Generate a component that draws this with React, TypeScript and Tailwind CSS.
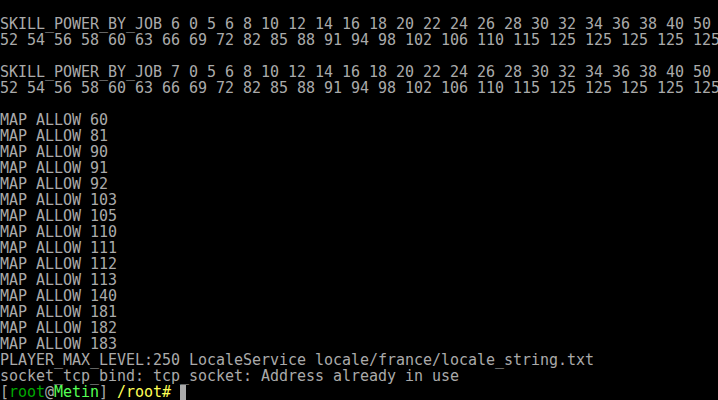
const skillRow1 = (job: number) =>
  `SKILL_POWER_BY_JOB ${job} 0 5 6 8 10 12 14 16 18 20 22 24 26 28 30 32 34 36 38 40 50`;
const skillRow2 =
  '52 54 56 58 60 63 66 69 72 82 85 88 91 94 98 102 106 110 115 125 125 125 125 125';

const maps = [60, 81, 90, 91, 92, 103, 105, 110, 111, 112, 113, 140, 181, 182, 183];

const lines: string[] = [
  '',
  skillRow1(6),
  skillRow2,
  '',
  skillRow1(7),
  skillRow2,
  '',
  ...maps.map((m) => `MAP ALLOW ${m}`),
  'PLAYER_MAX_LEVEL:250 LocaleService locale/france/locale_string.txt',
  'socket_tcp_bind: tcp_socket: Address already in use',
];

export default function App() {
  return (
    <div className="w-[718px] h-[400px] overflow-hidden bg-black text-[#aaaaaa] font-['DejaVu_Sans_Mono',monospace] text-[15px] leading-[16px] tracking-[-0.03px] whitespace-pre">
      {lines.map((line, i) => (
        <div key={i} className="h-[16px]">
          {line}
        </div>
      ))}
      {/* shell prompt */}
      <div className="h-[16px] flex items-start">
        <span>[</span>
        <span className="text-[#00aa00]">root</span>
        <span>@</span>
        <span className="text-[#55ff55]">Metin</span>
        <span>] </span>
        <span className="text-[#ffff55]">/root#</span>
        <span> </span>
        <span className="inline-block w-[6px] h-[15px] mt-[1px] bg-[#aaaaaa]" />
      </div>
    </div>
  );
}
